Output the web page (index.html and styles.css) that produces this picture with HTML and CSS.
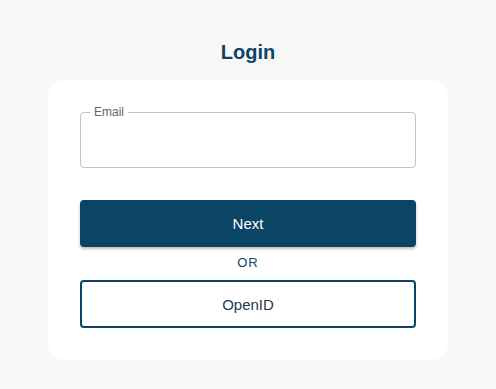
FILE: index.html
```html
<!DOCTYPE html>
<html lang="en">
<head>
  <meta charset="UTF-8">
  <meta name="viewport" content="width=device-width, initial-scale=1.0">
  <title>Login</title>
  <link rel="stylesheet" href="styles.css">
</head>
<body>
  <h1>Login</h1>
  <div class="card">
    <fieldset class="field">
      <legend>Email</legend>
      <input type="email" class="field-input">
    </fieldset>
    <button class="btn-next">Next</button>
    <div class="or">OR</div>
    <button class="btn-openid">OpenID</button>
  </div>
</body>
</html>
```

FILE: styles.css
```css
body {
  font-family: "Liberation Sans", Arial, sans-serif;
  margin: 0;
  background: #f7f7f7;
}
h1 {
  margin: 40px 0 16px;
  text-align: center;
  font-size: 20px;
  line-height: 24px;
  color: #0b4566;
}
.card {
  width: 400px;
  margin: 0 auto;
  box-sizing: border-box;
  padding: 25px 32px 32px;
  background: #fff;
  border-radius: 16px;
  display: flex;
  flex-direction: column;
}
.field {
  margin: 0;
  padding: 0 12px;
  height: 63px;
  box-sizing: border-box;
  border: 1px solid #c4c4c4;
  border-radius: 4px;
}
.field legend {
  padding: 0 4px;
  margin-left: -3px;
  font-size: 12px;
  line-height: 14px;
  color: #666;
}
.field-input {
  border: none;
  outline: none;
  width: 100%;
  height: 40px;
  font-size: 16px;
  background: transparent;
}
.btn-next {
  margin-top: 32px;
  height: 47px;
  border: none;
  border-radius: 4px;
  background: #0b4566;
  color: #fff;
  font-family: inherit;
  font-size: 15px;
  box-shadow: 0 2px 3px rgba(0, 0, 0, 0.25);
}
.or {
  margin: 8px 0 9px;
  text-align: center;
  font-size: 13px;
  line-height: 16px;
  letter-spacing: 1px;
  color: #0b4566;
}
.btn-openid {
  height: 48px;
  border: 2px solid #0b4566;
  border-radius: 4px;
  background: #fff;
  color: #1f3a4f;
  font-family: inherit;
  font-size: 15px;
}
```
